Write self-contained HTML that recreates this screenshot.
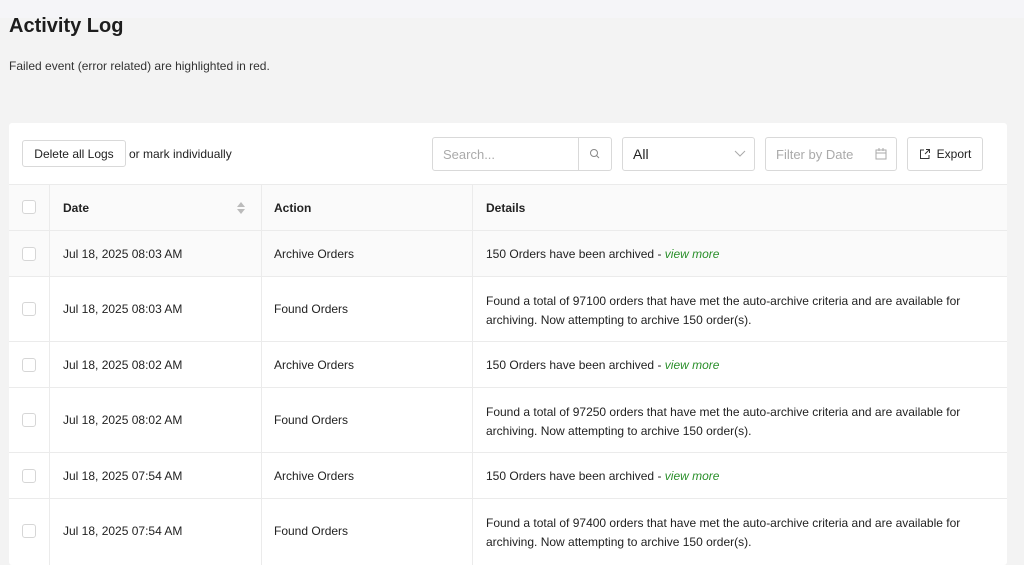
<!DOCTYPE html>
<html style="overflow:hidden;height:565px"><head><meta charset="utf-8"><style>
*{box-sizing:border-box;margin:0;padding:0}
body{width:1024px;height:565px;overflow:hidden;background:#f3f3f3;font-family:"Liberation Sans",sans-serif;color:#222;position:relative}
.top{position:absolute;left:0;top:0;width:1024px;height:18px;background:#f5f5f8}
h1{position:absolute;left:9px;top:15px;font-size:20px;font-weight:bold;color:#1d1d1d}
.sub{position:absolute;left:9px;top:59px;font-size:12px;color:#333}
.card{position:absolute;left:9px;top:123px;width:998px;height:442px;background:#fff;border-radius:3px;overflow:hidden}
.abs{position:absolute}
.btn{border:1px solid #d9d9d9;border-radius:3px;background:#fff;font-size:12px;color:#222;display:flex;align-items:center;justify-content:center}
.inp{border:1px solid #d9d9d9;border-radius:3px;background:#fff;font-size:13px;color:#aaa;display:flex;align-items:center;padding-left:10px}
.row{position:absolute;left:0;width:998px;border-top:1px solid #ebebeb;font-size:12px;color:#222}
.row div{position:absolute}
.cb{left:13px;width:14px;height:14px;border:1px solid #d6d6d6;border-radius:3px;background:#fff}
.vl{position:absolute;top:61px;width:1px;height:400px;background:#ebebeb}
a{color:#2a8f2a;font-style:italic;text-decoration:none}
</style></head><body>
<div class="top"></div>
<h1>Activity Log</h1>
<div class="sub">Failed event (error related) are highlighted in red.</div>
<div class="card">
  <div class="abs btn" style="left:13px;top:17px;width:104px;height:27px">Delete all Logs</div>
  <div class="abs" style="left:120px;top:24px;font-size:12px">or mark individually</div>
  <div class="abs inp" style="left:423px;top:14px;width:180px;height:34px">Search...</div>
  <div class="abs" style="left:569px;top:14px;width:1px;height:34px;background:#d9d9d9"></div>
  <svg class="abs" style="left:580px;top:25px" width="12" height="12" viewBox="0 0 12 12"><circle cx="5" cy="5" r="3.5" fill="none" stroke="#888" stroke-width="1"/><path d="M7.5 7.5L10 10" stroke="#888"/></svg>
  <div class="abs inp" style="left:613px;top:14px;width:133px;height:34px;color:#222;font-size:14px">All</div>
  <svg class="abs" style="left:725px;top:26px" width="12" height="10"><path d="M1 2l5 5 5-5" fill="none" stroke="#aaa"/></svg>
  <div class="abs inp" style="left:756px;top:14px;width:132px;height:34px">Filter by Date</div>
  <svg class="abs" style="left:866px;top:25px" width="12" height="12"><rect x="1" y="2" width="10" height="9" fill="none" stroke="#aaa"/><path d="M1 5h10M4 0v3M8 0v3" stroke="#aaa"/></svg>
  <div class="abs btn" style="left:898px;top:14px;width:76px;height:34px"><svg width="12" height="12" style="margin-right:6px"><path d="M5 2H1.5v8.5H10V7" fill="none" stroke="#333"/><path d="M6 6l4.5-4.5M7 1.5h3.5V5" fill="none" stroke="#333"/></svg>Export</div>
  <div class="row" style="top:61px;height:46px;background:#fafafa;font-weight:bold">
    <div class="cb" style="top:15px"></div><div style="left:54px;top:16px">Date</div>
    <svg style="position:absolute;left:228px;top:16px" width="8" height="14"><path d="M0 6l4-5 4 5zM0 8l4 5 4-5z" fill="#bbb"/></svg>
    <div style="left:265px;top:16px">Action</div><div style="left:477px;top:16px">Details</div>
  </div>
  <div class="row" style="top:107px;height:46px;background:#fafafa"><div class="cb" style="top:16px"></div><div style="left:54px;top:16px">Jul 18, 2025 08:03 AM</div><div style="left:265px;top:16px">Archive Orders</div><div style="left:477px;top:16px">150 Orders have been archived - <a>view more</a></div></div>
  <div class="row" style="top:153px;height:65px"><div class="cb" style="top:25px"></div><div style="left:54px;top:25px">Jul 18, 2025 08:03 AM</div><div style="left:265px;top:25px">Found Orders</div><div style="left:477px;top:15px;line-height:19px;width:500px">Found a total of 97100 orders that have met the auto-archive criteria and are available for archiving. Now attempting to archive 150 order(s).</div></div>
  <div class="row" style="top:218px;height:46px"><div class="cb" style="top:16px"></div><div style="left:54px;top:16px">Jul 18, 2025 08:02 AM</div><div style="left:265px;top:16px">Archive Orders</div><div style="left:477px;top:16px">150 Orders have been archived - <a>view more</a></div></div>
  <div class="row" style="top:264px;height:65px"><div class="cb" style="top:25px"></div><div style="left:54px;top:25px">Jul 18, 2025 08:02 AM</div><div style="left:265px;top:25px">Found Orders</div><div style="left:477px;top:15px;line-height:19px;width:500px">Found a total of 97250 orders that have met the auto-archive criteria and are available for archiving. Now attempting to archive 150 order(s).</div></div>
  <div class="row" style="top:329px;height:46px"><div class="cb" style="top:16px"></div><div style="left:54px;top:16px">Jul 18, 2025 07:54 AM</div><div style="left:265px;top:16px">Archive Orders</div><div style="left:477px;top:16px">150 Orders have been archived - <a>view more</a></div></div>
  <div class="row" style="top:375px;height:65px"><div class="cb" style="top:25px"></div><div style="left:54px;top:25px">Jul 18, 2025 07:54 AM</div><div style="left:265px;top:25px">Found Orders</div><div style="left:477px;top:15px;line-height:19px;width:500px">Found a total of 97400 orders that have met the auto-archive criteria and are available for archiving. Now attempting to archive 150 order(s).</div></div>
  <div class="vl" style="left:40px"></div><div class="vl" style="left:252px"></div><div class="vl" style="left:463px"></div>
</div>
</body></html>
